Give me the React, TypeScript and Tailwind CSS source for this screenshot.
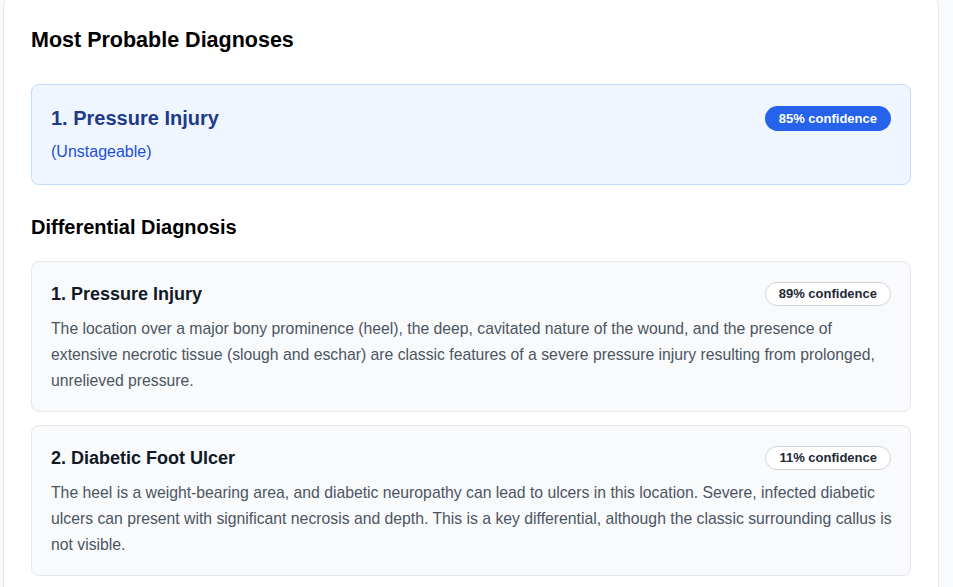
import React from 'react';

interface Diagnosis {
  name: string;
  confidence: number;
  rationale: string;
}

const differentials: Diagnosis[] = [
  {
    name: 'Pressure Injury',
    confidence: 89,
    rationale:
      'The location over a major bony prominence (heel), the deep, cavitated nature of the wound, and the presence of extensive necrotic tissue (slough and eschar) are classic features of a severe pressure injury resulting from prolonged, unrelieved pressure.',
  },
  {
    name: 'Diabetic Foot Ulcer',
    confidence: 11,
    rationale:
      'The heel is a weight-bearing area, and diabetic neuropathy can lead to ulcers in this location. Severe, infected diabetic ulcers can present with significant necrosis and depth. This is a key differential, although the classic surrounding callus is not visible.',
  },
];

const App: React.FC = () => {
  return (
    <div className="min-h-screen bg-[#f9fafb] font-['Liberation_Sans',Arial,sans-serif] overflow-hidden">
      <div className="ml-[3px] -mt-[6px] w-[936px] bg-white border border-[#e5e7eb] rounded-xl px-[27px] pt-[31px] pb-6">
        {/* Most probable */}
        <h2 className="text-[21.5px] leading-7 font-bold text-black">Most Probable Diagnoses</h2>

        <div className="mt-[30px] bg-[#eff6ff] border border-[#bfdbfe] rounded-lg px-[19px] pt-[19px] pb-[20px]">
          <div className="flex items-center justify-between">
            <h3 className="text-xl leading-7 font-bold text-[#1e3a8a]">1. Pressure Injury</h3>
            <span className="rounded-full bg-[#2563eb] text-white text-[13px] leading-[17px] font-bold px-[14px] py-1">
              85% confidence
            </span>
          </div>
          <p className="mt-2 text-base leading-6 text-[#1d4ed8]">(Unstageable)</p>
        </div>

        {/* Differential */}
        <h2 className="mt-[28px] text-xl leading-7 font-bold text-black">Differential Diagnosis</h2>

        <div className="mt-[20px] flex flex-col gap-[13px]">
          {differentials.map((d, i) => (
            <div key={d.name} className="bg-[#f9fafb] border border-[#e5e7eb] rounded-lg px-[19px] pt-[18px] pb-[17px]">
              <div className="flex items-center justify-between">
                <h3 className="text-lg leading-7 font-bold text-[#111827]">
                  {i + 1}. {d.name}
                </h3>
                <span className="rounded-full bg-white border border-[#d1d5db] text-[#1f2937] text-[13px] leading-4 font-bold px-[13px] py-[3px]">
                  {d.confidence}% confidence
                </span>
              </div>
              <p className="mt-[8px] -mr-[4px] text-[15.75px] leading-[26px] text-[#4b5563]">{d.rationale}</p>
            </div>
          ))}
        </div>
      </div>
    </div>
  );
};

export default App;
